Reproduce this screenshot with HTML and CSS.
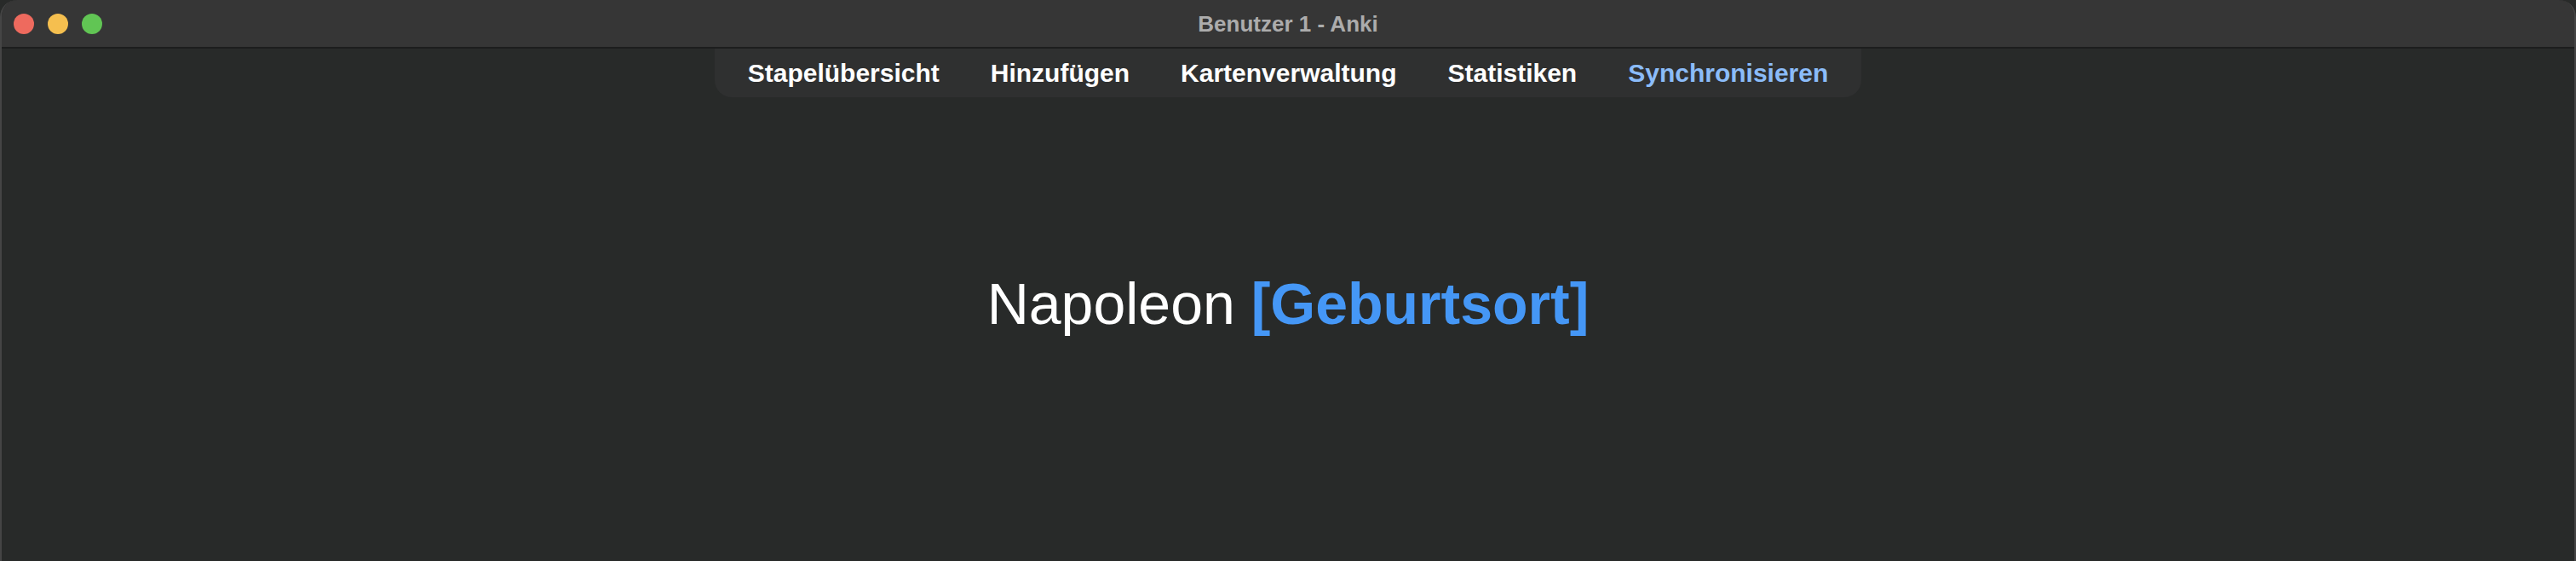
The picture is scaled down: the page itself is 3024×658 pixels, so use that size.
FILE: index.html
```html
<!DOCTYPE html>
<html lang="de">
<head>
<meta charset="utf-8">
<title>Benutzer 1 - Anki</title>
<link rel="stylesheet" href="styles.css">
</head>
<body>
<div class="window">
  <header class="titlebar">
    <div class="lights">
      <span class="light red"></span>
      <span class="light yellow"></span>
      <span class="light green"></span>
    </div>
    <div class="title">Benutzer 1 - Anki</div>
    <div class="spacer"></div>
  </header>
  <main class="content">
    <nav class="toolbar">
      <a class="tab">Stapelübersicht</a>
      <a class="tab">Hinzufügen</a>
      <a class="tab">Kartenverwaltung</a>
      <a class="tab">Statistiken</a>
      <a class="tab sync">Synchronisieren</a>
    </nav>
    <div class="card">Napoleon <span class="cloze">[Geburtsort]</span></div>
  </main>
</div>
</body>
</html>
```

FILE: styles.css
```css
html, body {
  margin: 0;
  padding: 0;
  height: 100%;
  background: #282a29;
}
body {
  font-family: "Liberation Sans", Arial, Helvetica, sans-serif;
}
.window {
  height: 658px;
  box-sizing: border-box;
  background: #282a29;
  border-radius: 20px 20px 0 0;
  border-left: 2px solid #454545;
  border-right: 2px solid #454545;
  overflow: hidden;
  display: flex;
  flex-direction: column;
}
.titlebar {
  height: 55px;
  flex: 0 0 55px;
  background: #363636;
  border-top: 1px solid #5e5e5e;
  border-bottom: 2px solid #1d1e1e;
  box-sizing: content-box;
  margin-top: -1px;
  display: grid;
  grid-template-columns: 1fr auto 1fr;
  align-items: center;
}
.lights {
  display: flex;
  gap: 16px;
  padding-left: 14px;
}
.light {
  width: 24px;
  height: 24px;
  border-radius: 50%;
  display: block;
}
.red { background: #ee6a5e; }
.yellow { background: #f5bf4f; }
.green { background: #61c554; }
.title {
  font-size: 26px;
  font-weight: bold;
  color: #acacac;
  line-height: 30px;
}
.content {
  flex: 1;
  display: flex;
  flex-direction: column;
  align-items: center;
}
.toolbar {
  display: flex;
  background: #2f3030;
  border-radius: 0 0 20px 20px;
  padding: 11px 9px;
}
.tab {
  font-size: 30px;
  font-weight: bold;
  line-height: 35px;
  color: #ffffff;
  padding: 0 30px;
}
.tab.sync {
  color: #8bbcf9;
}
.card {
  margin-top: 203px;
  font-size: 68px;
  line-height: 78px;
  color: #ffffff;
  text-align: center;
}
.cloze {
  font-weight: bold;
  color: #4597f6;
}
```
